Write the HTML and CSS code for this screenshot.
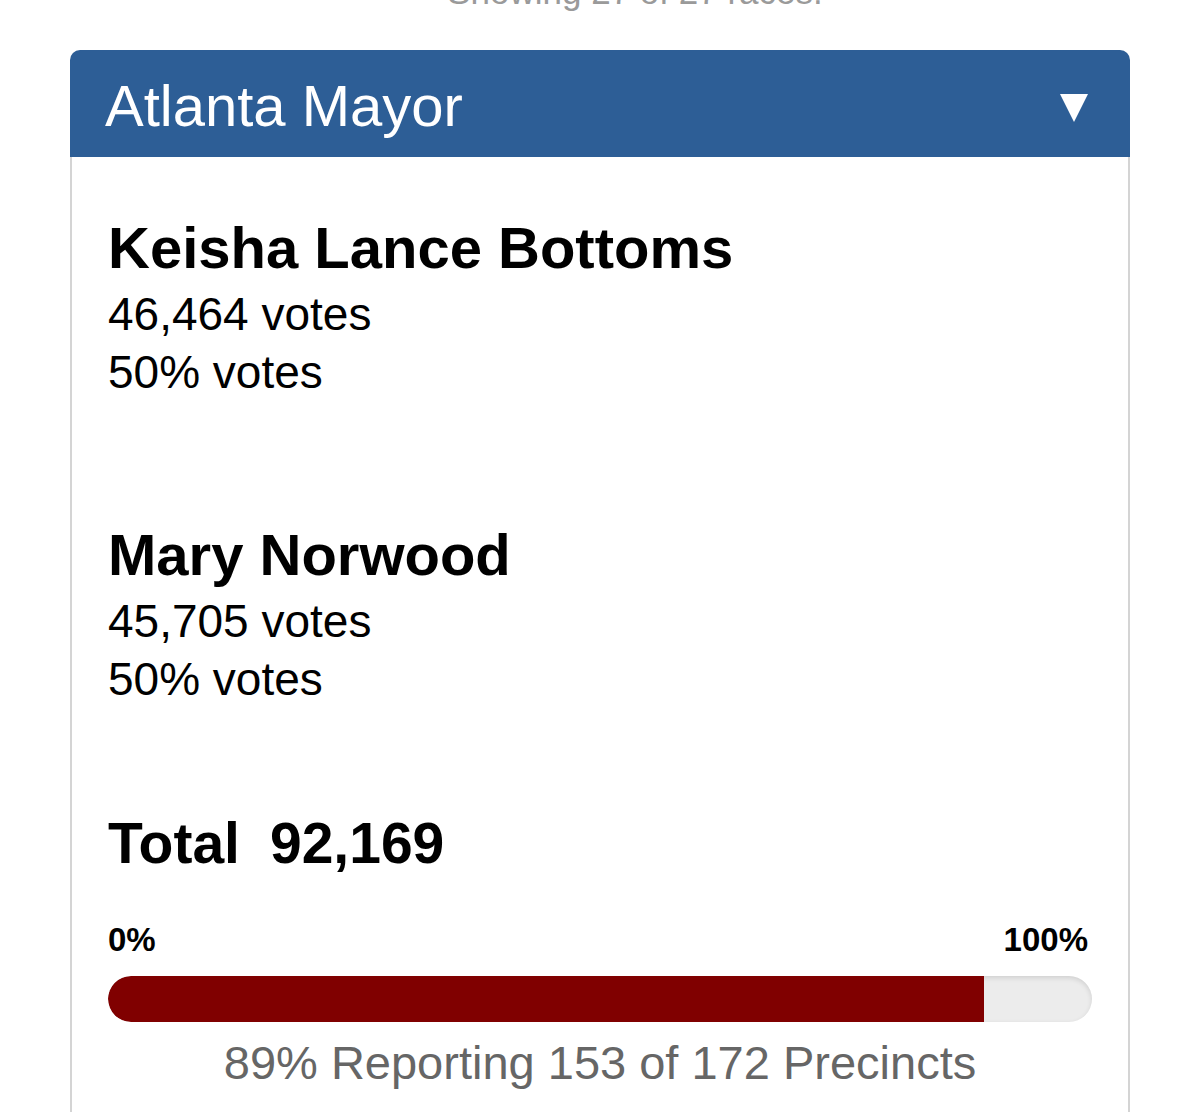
FILE: index.html
```html
<!DOCTYPE html>
<html lang="en">
<head>
<meta charset="utf-8">
<title>Atlanta Mayor</title>
<link rel="stylesheet" href="styles.css">
</head>
<body>
<div class="page">
  <p class="top-note">Showing 27 of 27 races.</p>
  <section class="card">
    <header class="card-header">
      <h2 class="race-title">Atlanta Mayor</h2>
      <svg class="toggle" width="28" height="28" viewBox="0 0 28 28" aria-hidden="true"><polygon points="0,0 28,0 14,28" fill="#ffffff"/></svg>
    </header>
    <div class="card-body">
      <div class="candidate">
        <h3 class="cand-name">Keisha Lance Bottoms</h3>
        <div class="cand-line">46,464 votes</div>
        <div class="cand-line">50% votes</div>
      </div>
      <div class="candidate">
        <h3 class="cand-name">Mary Norwood</h3>
        <div class="cand-line">45,705 votes</div>
        <div class="cand-line">50% votes</div>
      </div>
      <div class="total"><span>Total</span><span>92,169</span></div>
      <div class="scale"><span>0%</span><span>100%</span></div>
      <div class="bar"><div class="bar-fill" style="width: 89%"></div></div>
      <p class="reporting">89% Reporting 153 of 172 Precincts</p>
    </div>
  </section>
</div>
</body>
</html>
```
FILE: styles.css
```css
html, body {
  margin: 0;
  padding: 0;
  background: #ffffff;
  overflow: hidden;
}

.page {
  padding: 0 70px;
  font-family: "Liberation Sans", Arial, Helvetica, sans-serif;
  color: #000;
}

.top-note {
  margin: -28px 0 0 70px;
  font-size: 35px;
  line-height: 40px;
  color: #9a9a9a;
  text-align: center;
}

.card {
  margin-top: 38px;
}

.card-header {
  display: flex;
  align-items: center;
  justify-content: space-between;
  height: 107px;
  box-sizing: border-box;
  padding: 4px 42px 0 35px;
  background: #2d5e96;
  border-radius: 10px 10px 0 0;
}

.race-title {
  margin: 0;
  font-size: 58px;
  line-height: 64px;
  font-weight: normal;
  color: #ffffff;
}

.toggle {
  display: block;
  margin-top: 4px;
}

.card-body {
  border-left: 2px solid #d4d4d4;
  border-right: 2px solid #d4d4d4;
  padding: 59px 36px 40px;
}

.candidate {
  margin-bottom: 122px;
}

.candidate + .candidate {
  margin-bottom: 103px;
}

.cand-name {
  margin: 0 0 5px;
  font-size: 58px;
  line-height: 64px;
  font-weight: bold;
}

.cand-line {
  font-size: 46px;
  line-height: 58px;
}

.total {
  display: flex;
  gap: 30px;
  font-size: 57px;
  line-height: 64px;
  font-weight: bold;
}

.scale {
  display: flex;
  justify-content: space-between;
  margin-top: 45px;
  font-size: 33px;
  line-height: 40px;
  font-weight: bold;
  padding-right: 4px;
}

.bar {
  margin-top: 16px;
  height: 46px;
  border-radius: 23px;
  background: #ececec;
  box-shadow: inset 0 2px 5px rgba(0, 0, 0, 0.12);
  overflow: hidden;
}

.bar-fill {
  height: 100%;
  background: #800000;
  border-radius: 23px 0 0 23px;
}

.reporting {
  margin: 12px 0 0;
  font-size: 47px;
  line-height: 58px;
  color: #666666;
  text-align: center;
}
```
